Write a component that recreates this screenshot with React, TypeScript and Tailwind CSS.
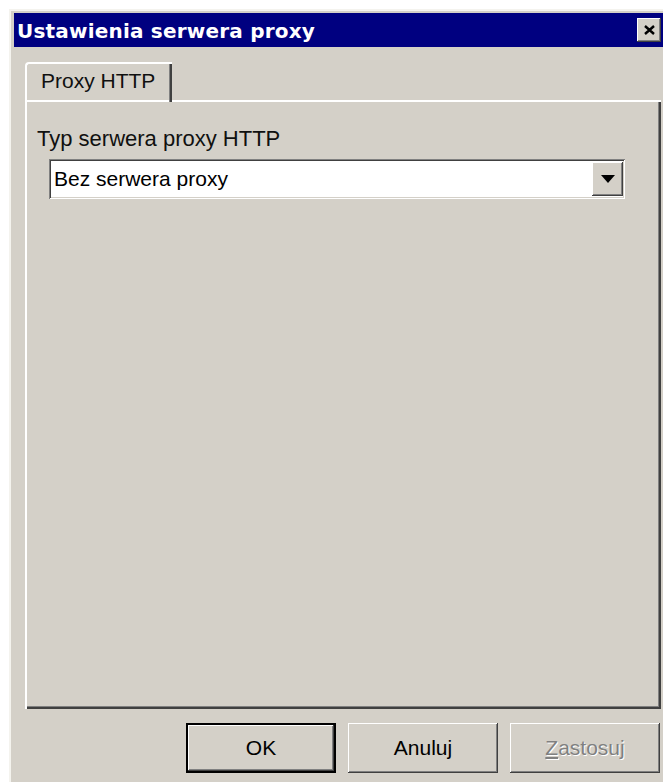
import React from "react";

// classic 3D bevels
const raised =
  "shadow-[inset_-1px_-1px_0_#404040,inset_1px_1px_0_#ffffff,inset_-2px_-2px_0_#808080,inset_2px_2px_0_#d4d0c8]";
const sunken =
  "shadow-[inset_1px_1px_0_#808080,inset_-1px_-1px_0_#ffffff,inset_2px_2px_0_#404040,inset_-2px_-2px_0_#d4d0c8]";

function Button({
  label,
  isDefault,
  disabled,
}: {
  label: React.ReactNode;
  isDefault?: boolean;
  disabled?: boolean;
}) {
  return (
    <div
      className={`w-[150px] h-[50px] flex items-center justify-center text-[21px] ${
        isDefault ? "border-2 border-black" : ""
      } ${raised} ${disabled ? "text-[#808080] [text-shadow:1px_1px_0_#ffffff]" : "text-black"}`}
    >
      {label}
    </div>
  );
}

export default function App() {
  return (
    <div
      className="w-[663px] h-[782px] overflow-hidden bg-white pl-[9px] pt-[9px]"
      style={{ fontFamily: '"Liberation Sans", Arial, sans-serif' }}
    >
      <div className="w-[658px] h-[790px] bg-[#d4d0c8] pl-[5px] pr-[4px] pt-[4px] shadow-[inset_2px_2px_0_#f4f3ee,inset_1px_1px_0_#d4d0c8]">
        {/* title bar */}
        <div className="h-[34px] bg-[#000080] flex items-center justify-between pl-[3px] pr-[2px]">
          <span
            className="text-white font-bold text-[20px] leading-[24px] pt-[2px] tracking-[0.2px]"
            style={{ fontFamily: '"DejaVu Sans", Tahoma, sans-serif' }}
          >
            Ustawienia serwera proxy
          </span>
          <div className={`w-[24px] h-[24px] bg-[#d4d0c8] flex items-center justify-center ${raised}`}>
            <svg width="11" height="10" viewBox="0 0 11 10">
              <path d="M1 1 L10 9 M10 1 L1 9" stroke="#000" strokeWidth="2.4" />
            </svg>
          </div>
        </div>

        {/* tab strip */}
        <div className="pl-[11px] pt-[15px]">
          <div className="flex">
            <div className="w-[147px] h-[40px] rounded-tl-[4px] border-t-2 border-l-2 border-white pl-[14px] pt-[4px] text-[21px] leading-[26px] text-[#101010] shadow-[inset_-2px_0_0_#404040,inset_-3px_0_0_#808080]">
              Proxy HTTP
            </div>
          </div>

          {/* tab page */}
          <div className="w-[636px] h-[609px] -mt-[2px] border-t-2 border-l-2 border-white shadow-[inset_-2px_-2px_0_#404040,inset_-3px_-3px_0_#808080] pl-[10px] pt-[24px]">
            <div className="text-[22px] text-[#101010] leading-[26px]">Typ serwera proxy HTTP</div>
            <div className={`mt-[7px] ml-[12px] w-[576px] h-[40px] bg-white flex items-center justify-between pl-[5px] pr-[2px] ${sunken}`}>
              <span className="text-[21px] leading-[26px] text-black">Bez serwera proxy</span>
              <div className={`w-[31px] h-[34px] bg-[#d4d0c8] flex items-center justify-center ${raised}`}>
                <svg width="14" height="8" viewBox="0 0 14 8">
                  <path d="M0 0 H14 L7 8 Z" fill="#000" />
                </svg>
              </div>
            </div>
          </div>
        </div>

        {/* buttons */}
        <div className="flex justify-end gap-[12px] pt-[14px] pr-[3px]">
          <Button label="OK" isDefault />
          <Button label="Anuluj" />
          <Button
            label={
              <span>
                <span className="underline">Z</span>astosuj
              </span>
            }
            disabled
          />
        </div>
      </div>
    </div>
  );
}
